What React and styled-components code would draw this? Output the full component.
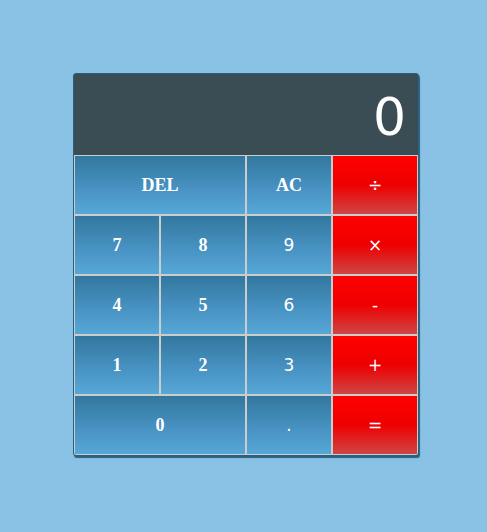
import React from "react";
import styled, { createGlobalStyle } from "styled-components";

const Global = createGlobalStyle`
  html, body { margin: 0; padding: 0; background: #89c2e5; }
  body { font-family: "Liberation Serif", serif; }
`;

const Page = styled.div`
  padding: 73px 0 0 73px;
  min-height: 532px;
  box-sizing: border-box;
`;

const Calc = styled.div`
  width: 344px;
  border: 1px solid #28607f;
  border-radius: 3px;
  background: #3a4d54;
  box-shadow: 1px 2px 1px #28607f;
  overflow: hidden;
`;

const Display = styled.div`
  height: 81px;
  display: flex;
  align-items: center;
  justify-content: flex-end;
  padding: 4px 12px 0 0;
  box-sizing: border-box;
  color: #fff;
  font-family: "DejaVu Sans", sans-serif;
  font-size: 52px;
  font-weight: 400;
`;

const Keys = styled.div`
  display: grid;
  grid-template-columns: repeat(4, 86px);
  grid-auto-rows: 60px;
`;

const Key = styled.button`
  box-sizing: border-box;
  margin: 0;
  padding: 0;
  border: 1px solid #cccccc;
  border-radius: 0;
  grid-column: span ${(p) => p.$span || 1};
  color: #fff;
  font-family: ${(p) =>
    p.$sans ? '"DejaVu Sans", sans-serif' : '"Liberation Serif", serif'};
  font-weight: ${(p) => (p.$sans ? 400 : 700)};
  font-size: ${(p) => (p.$sans ? "17px" : "18px")};
  font-variant-numeric: oldstyle-nums;
  background: ${(p) =>
    p.$op
      ? "linear-gradient(180deg, #ff0000 0%, #ee0000 50%, #cf4545 100%)"
      : "linear-gradient(180deg, #32779e 0%, #4792c2 55%, #56a7d7 100%)"};
  display: flex;
  align-items: center;
  justify-content: center;
  cursor: pointer;
`;

const keys = [
  { l: "DEL", span: 2 },
  { l: "AC" },
  { l: "÷", op: true, sans: true },
  { l: "7" },
  { l: "8" },
  { l: "9", sans: true },
  { l: "×", op: true, sans: true },
  { l: "4" },
  { l: "5" },
  { l: "6", sans: true },
  { l: "-", op: true, sans: true },
  { l: "1" },
  { l: "2" },
  { l: "3", sans: true },
  { l: "+", op: true, sans: true },
  { l: "0", span: 2 },
  { l: ".", sans: true },
  { l: "=", op: true, sans: true },
];

export default function App() {
  return (
    <>
      <Global />
      <Page>
        <Calc>
          <Display>0</Display>
          <Keys>
            {keys.map((k, i) => (
              <Key key={i} $span={k.span} $op={k.op} $sans={k.sans}>
                {k.l}
              </Key>
            ))}
          </Keys>
        </Calc>
      </Page>
    </>
  );
}
